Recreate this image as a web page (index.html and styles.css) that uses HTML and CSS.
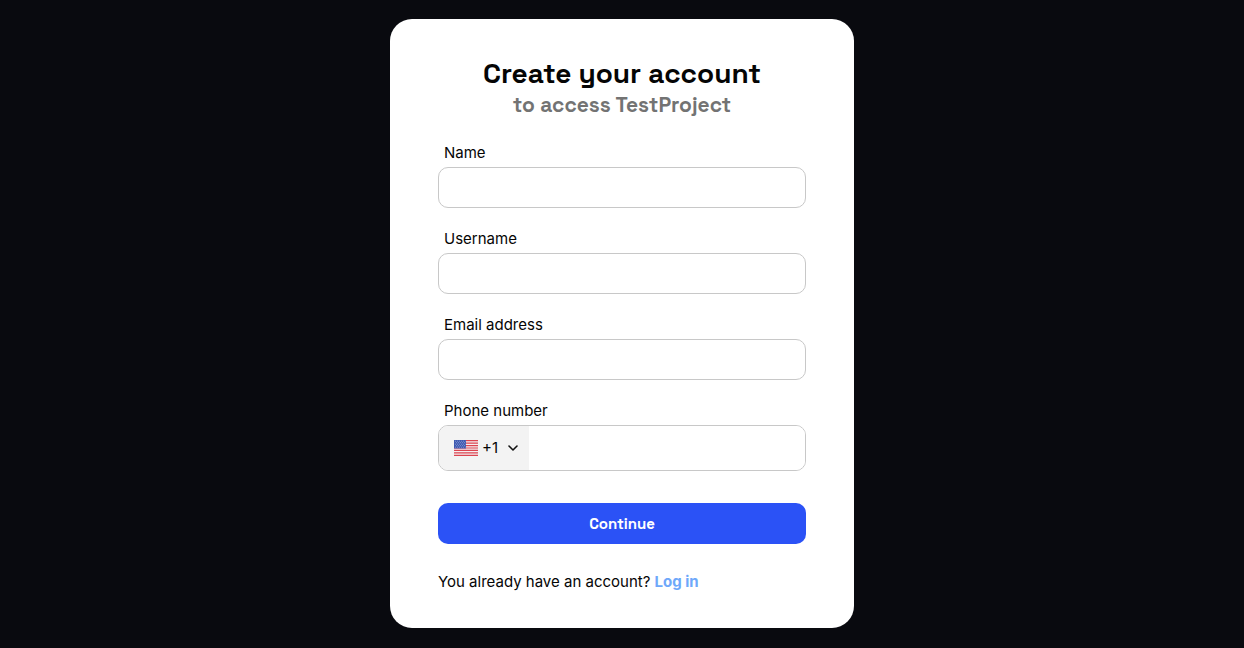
FILE: index.html
```html
<!DOCTYPE html>
<html lang="en">
<head>
<meta charset="utf-8">
<meta name="viewport" content="width=device-width, initial-scale=1">
<title>Create your account</title>
<link rel="stylesheet" href="styles.css">
</head>
<body>
<main class="card">
  <header class="heading">
    <h1 class="title">Create your account</h1>
    <p class="subtitle">to access TestProject</p>
  </header>
  <form class="form">
    <div class="field">
      <label class="label" for="name">Name</label>
      <input class="input" id="name" type="text">
    </div>
    <div class="field">
      <label class="label" for="username">Username</label>
      <input class="input" id="username" type="text">
    </div>
    <div class="field">
      <label class="label" for="email">Email address</label>
      <input class="input" id="email" type="email">
    </div>
    <div class="field">
      <label class="label" for="phone">Phone number</label>
      <div class="phone">
        <button class="country" type="button" aria-label="Country code +1">
          <svg class="flag" viewBox="0 0 24 16" aria-hidden="true">
            <path fill="#f5eef0" d="M0 0h24v16H0z"/>
            <path stroke="#dc4450" stroke-width="1.23" d="M0 .62h24M0 3.08h24M0 5.54h24M0 8h24M0 10.46h24M0 12.92h24M0 15.38h24"/>
            <path fill="#3f59b0" d="M0 0h12v8.6H0z"/>
            <path stroke="#a5b4e0" stroke-width=".8" stroke-dasharray=".8 1.2" d="M1 1.2h10.5M2 2.7h9M1 4.2h10.5M2 5.7h9M1 7.2h10.5"/>
          </svg>
          <span>+1</span>
          <svg class="chevron" viewBox="0 0 10 10" aria-hidden="true"><path d="M1 3l4 4 4-4" fill="none" stroke="#111" stroke-width="1.6" stroke-linecap="round" stroke-linejoin="round"/></svg>
        </button>
        <input class="phone-input" id="phone" type="tel">
      </div>
    </div>
    <button class="submit" type="submit">Continue</button>
  </form>
  <p class="footer">You already have an account? <a class="link" href="#login">Log in</a></p>
</main>
</body>
</html>
```
FILE: styles.css
```css
* { box-sizing: border-box; }

body {
  margin: 0;
  min-height: 100vh;
  padding: 19px 16px 20px;
  display: flex;
  justify-content: center;
  align-items: flex-start;
  background: #090a0f;
  color: #050505;
  font: 15px/20px Inter, "Liberation Sans", sans-serif;
}

.card {
  width: 100%;
  max-width: 464px;
  padding: 36px 48px;
  border-radius: 22px;
  background: #fff;
}

.heading {
  margin-bottom: 24px;
  text-align: center;
  font-family: "Space Grotesk", Inter, sans-serif;
  font-weight: 700;
}

.title {
  margin: 0;
  font-size: 28px;
  line-height: 36px;
}

.subtitle {
  margin: 0;
  color: #737373;
  font-size: 21px;
  line-height: 28px;
}

.field {
  display: flex;
  flex-direction: column;
  gap: 4px;
  margin-bottom: 21px;
}

.label { padding: 0 6px; }

.input,
.phone {
  width: 100%;
  height: 41px;
  border: 1px solid #c8c8c8;
  border-radius: 10px;
  background: #fff;
}

.input {
  padding: 0 14px;
  font: inherit;
}

.phone {
  display: flex;
  height: 46px;
  overflow: hidden;
}

.country {
  display: flex;
  align-items: center;
  gap: 4px;
  padding: 0 11px 0 15px;
  border: 0;
  background: #f3f3f3;
  color: inherit;
  font: inherit;
}

.flag {
  width: 24px;
  height: 16px;
}

.chevron {
  width: 10px;
  height: 10px;
  margin-left: 6px;
}

.phone-input {
  flex: 1;
  min-width: 0;
  padding: 0 14px;
  border: 0;
  font: inherit;
}

.submit {
  width: 100%;
  height: 41px;
  margin-top: 11px;
  border: 0;
  border-radius: 10px;
  background: #2b52f6;
  color: #fff;
  font: 700 15px/20px "Space Grotesk", Inter, sans-serif;
}

.footer { margin: 28px 0 0; }

.link {
  color: #6ea8fa;
  font-weight: 700;
  text-decoration: none;
}
```
